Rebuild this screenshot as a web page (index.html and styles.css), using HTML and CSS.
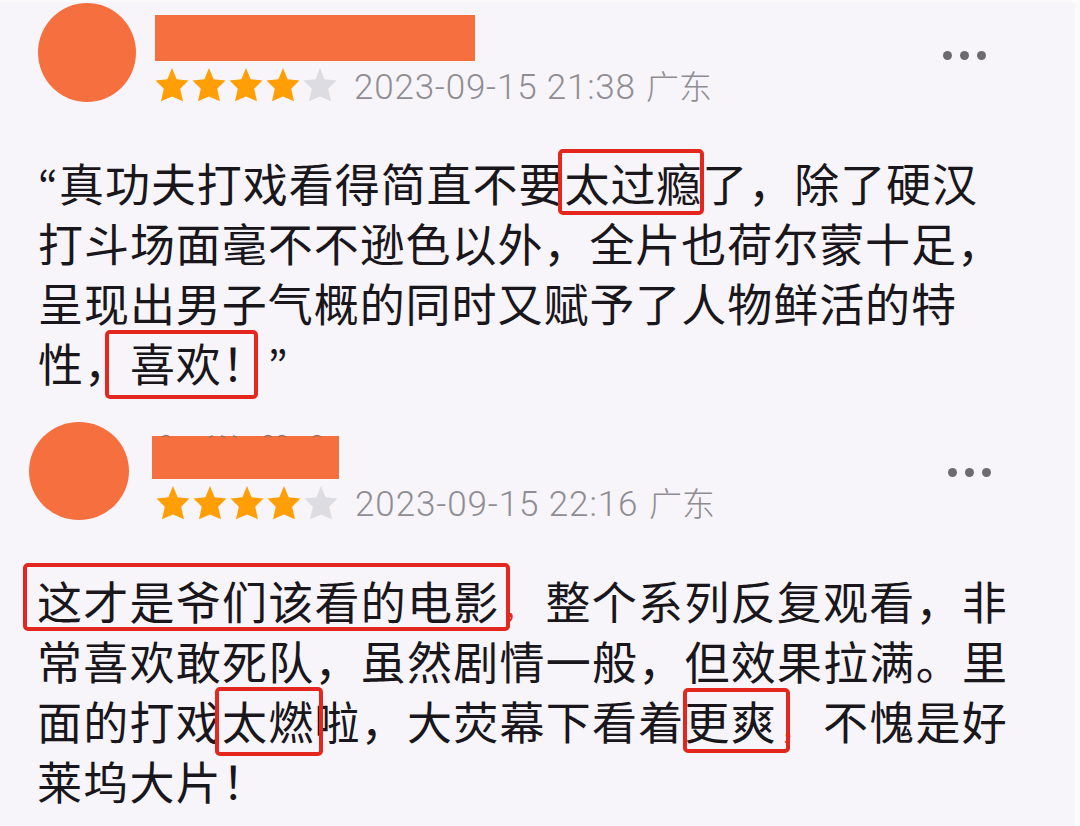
FILE: index.html
```html
<!DOCTYPE html>
<html lang="zh-CN">
<head>
    <meta charset="UTF-8">
    <meta name="viewport" content="width=device-width, initial-scale=1.0">
    <title>影评</title>
    <link rel="stylesheet" href="styles.css">
</head>
<body>
    <svg width="0" height="0" class="defs">
        <symbol id="star" viewBox="0 0 34 34">
            <path d="M17 0 L21.6 11.2 L33.5 12.4 L25.2 20.8 L28 33.2 L17 28.4 L6 33.2 L8.8 20.8 L0.5 12.4 L12.4 11.2 Z"/>
        </symbol>
    </svg>

    <div class="page">
        <div class="review">
            <div class="header">
                <div class="avatar"></div>
                <div class="info">
                    <div class="name"></div>
                    <div class="meta">
                        <div class="stars">
                            <svg><use href="#star"/></svg>
                            <svg><use href="#star"/></svg>
                            <svg><use href="#star"/></svg>
                            <svg><use href="#star"/></svg>
                            <svg class="off"><use href="#star"/></svg>
                        </div>
                        <span class="date">2023-09-15 21:38</span>
                        <span class="place">广东</span>
                    </div>
                </div>
                <div class="more"><i></i><i></i><i></i></div>
            </div>
            <p class="text">
                <span class="quote" lang="ko">“</span>真功夫打戏看得简直不要<span class="mark mark-a">太过瘾</span>了，除了硬汉<br>
                打斗场面毫不不逊色以外，全片也荷尔蒙十足，<br>
                呈现出男子气概的同时又赋予了人物鲜活的特<br>
                性，<span class="mark mark-b">喜欢！</span><span class="quote" lang="ko">”</span>
            </p>
        </div>

        <div class="review second">
            <div class="header">
                <div class="avatar"></div>
                <div class="info">
                    <div class="name">
                        <svg class="bumps" width="187" height="4" viewBox="0 0 187 4">
                            <path d="M10 3 Q14 0 18 3 M57 3 l4 -1 M69 2 l4 1 M81 2 l4 1 M112 3 Q116 0 120 3 M126 3 Q130 0 134 3 M161 3 Q165 0 169 3"/>
                        </svg>
                    </div>
                    <div class="meta">
                        <div class="stars">
                            <svg><use href="#star"/></svg>
                            <svg><use href="#star"/></svg>
                            <svg><use href="#star"/></svg>
                            <svg><use href="#star"/></svg>
                            <svg class="off"><use href="#star"/></svg>
                        </div>
                        <span class="date">2023-09-15 22:16</span>
                        <span class="place">广东</span>
                    </div>
                </div>
                <div class="more"><i></i><i></i><i></i></div>
            </div>
            <p class="text">
                <span class="mark mark-c">这才是爷们该看的电影</span><span class="comma">，</span>整个系列反复观看，非<br>
                常喜欢敢死队，虽然剧情一般，但效果拉满。里<br>
                面的打戏<span class="mark mark-d">太燃</span>啦，大荧幕下看着<span class="mark mark-e">更爽</span><span class="comma">，</span>不愧是好<br>
                莱坞大片！
            </p>
        </div>
    </div>
</body>
</html>
```
FILE: styles.css
```css
* {
    box-sizing: border-box;
}
body {
    margin: 0;
    background-color: #f7f5f9;
    font-family: "Noto Sans CJK SC", sans-serif;
    color: #19161c;
}
.defs {
    position: absolute;
}
.page {
    width: 1080px;
    height: 826px;
    overflow: hidden;
    border-top: 2px solid #fcfcfd;
    border-right: 5px solid #fbfbfc;
}
.review {
    height: 418px;
    padding: 1px 0 0 38px;
}
.header {
    display: flex;
    align-items: flex-start;
    height: 150px;
}
.avatar {
    width: 98px;
    height: 99px;
    border-radius: 50%;
    background-color: #f66f3e;
}
.info {
    width: 600px;
    margin: 12px 0 0 19px;
}
.name {
    position: relative;
    width: 320px;
    height: 46px;
    background-color: #f66f3e;
}
.meta {
    display: flex;
    align-items: center;
    height: 52px;
    white-space: nowrap;
    color: #8f8d93;
}
.stars {
    display: flex;
    gap: 3px;
    margin: 0 17px 4px 0;
}
.stars svg {
    width: 34px;
    height: 34px;
    fill: #ff9f05;
}
.stars .off {
    fill: #dddce2;
}
.date {
    width: 292px;
    font-family: Roboto, sans-serif;
    font-weight: 300;
    font-size: 35px;
    letter-spacing: 0.8px;
}
.place {
    margin-bottom: 4px;
    font-weight: 300;
    font-size: 33px;
}
.more {
    display: flex;
    gap: 8px;
    margin: 48px 0 0 188px;
}
.more i {
    width: 9px;
    height: 9px;
    border-radius: 50%;
    background-color: #6d6b70;
}
.text {
    margin: 0;
    font-size: 45px;
    line-height: 60px;
    letter-spacing: 0.95px;
    white-space: nowrap;
}
.quote {
    display: inline-block;
    width: 21px;
    font-family: "Noto Sans CJK KR", sans-serif;
    font-size: 42px;
    line-height: 1;
    letter-spacing: 0;
}
.mark {
    position: relative;
}
.mark::after {
    content: "";
    position: absolute;
    box-sizing: border-box;
    border: 4px solid #e3271f;
    border-radius: 5px;
}
.mark-a::after {
    left: -6px;
    top: -1px;
    width: 146px;
    height: 66px;
}
.mark-b::after {
    left: -25px;
    top: 0;
    width: 153px;
    height: 69px;
}
.mark-c::after {
    left: -14px;
    top: -5px;
    width: 487px;
    height: 68px;
}
.mark-d::after {
    left: -7px;
    top: -1px;
    width: 108px;
    height: 69px;
}
.mark-e::after {
    left: -2px;
    top: 0;
    width: 107px;
    height: 65px;
}
/* comma tucked under the edge of the frame before it */
.comma {
    display: inline-block;
    width: 46px;
    padding-left: 4px;
    font-size: 28px;
    line-height: 1;
    letter-spacing: 0;
    color: #e3271f;
}

/* second review */
.second {
    padding: 2px 0 0 29px;
}
.second .header {
    height: 149px;
}
.second .avatar {
    width: 100px;
    height: 98px;
}
.second .info {
    margin: 14px 0 0 23px;
}
.second .name {
    width: 187px;
    height: 43px;
}
.second .stars {
    margin: 0 17px 5px 4px;
}
.second .date {
    width: 294px;
    margin-bottom: 2px;
    letter-spacing: 0.9px;
}
.second .place {
    margin-bottom: 6px;
}
.second .more {
    margin: 46px 0 0 196px;
}
.second .text {
    padding-left: 8px;
    letter-spacing: 1.25px;
}
.bumps {
    position: absolute;
    left: 0;
    top: -2px;
    fill: none;
    stroke: #a0705f;
    stroke-width: 1.5;
}
```
